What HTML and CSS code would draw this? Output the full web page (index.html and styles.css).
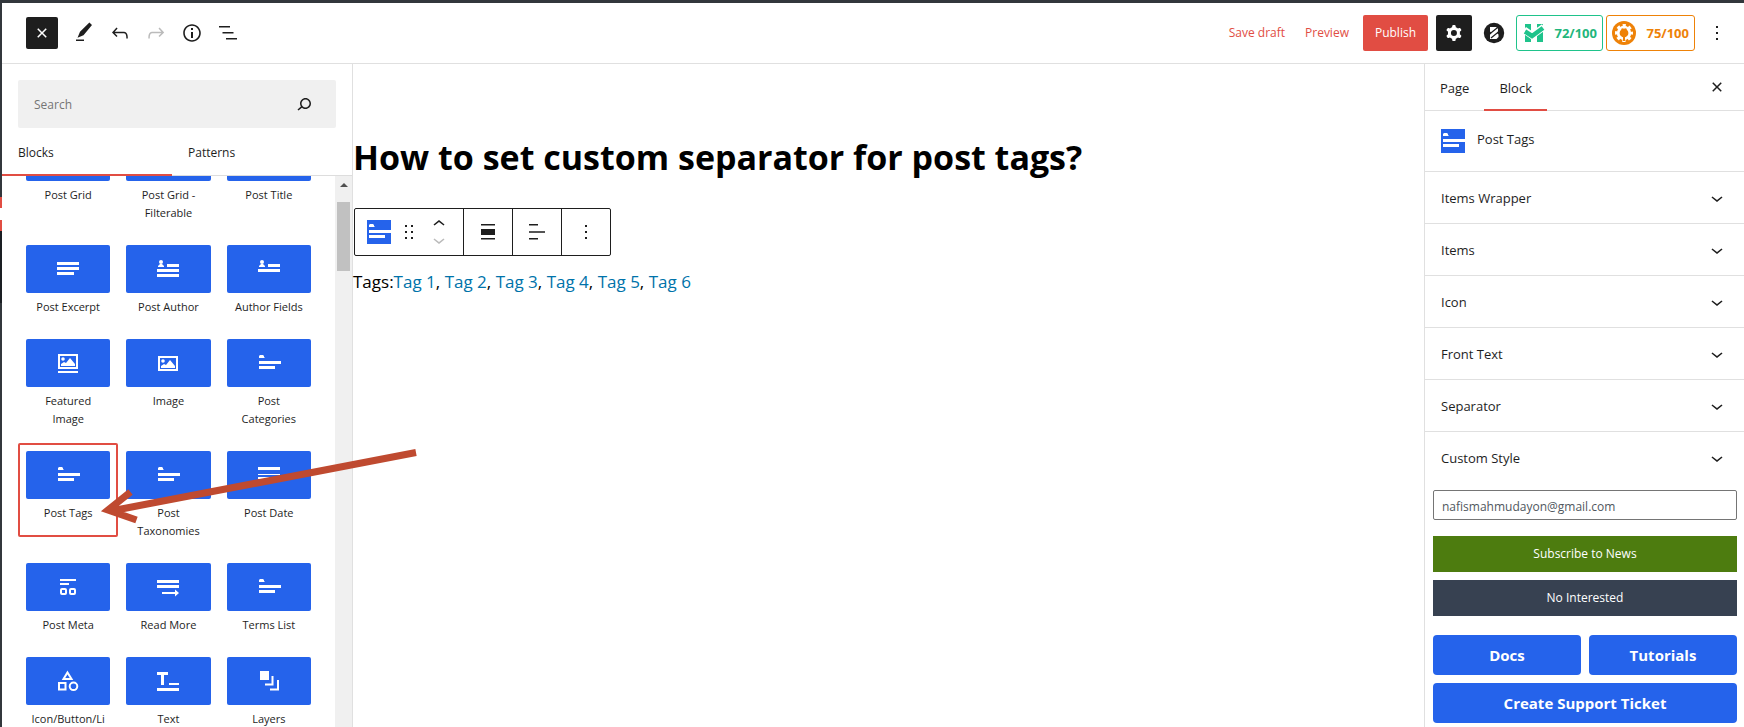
FILE: index.html
```html
<!DOCTYPE html>
<html lang="en">
<head>
<meta charset="utf-8">
<title>Edit Page</title>
<link rel="stylesheet" href="styles.css">
</head>
<body>
<svg class="sprite" aria-hidden="true">
  <symbol id="i-close" viewBox="0 0 24 24"><path d="M12 13.06l3.712 3.713 1.061-1.06L13.061 12l3.712-3.712-1.06-1.06L12 10.938 8.288 7.227l-1.061 1.06L10.939 12l-3.712 3.712 1.06 1.061L12 13.061z"/></symbol>
  <symbol id="i-down" viewBox="0 0 24 24"><path d="M17.5 11.6L12 16l-5.5-4.4.9-1.2L12 14l4.5-3.6 1 1.2z"/></symbol>
  <symbol id="i-up" viewBox="0 0 24 24"><path d="M6.5 12.4L12 8l5.5 4.4-.9 1.2L12 10l-4.5 3.6-1-1.2z"/></symbol>
  <symbol id="i-more" viewBox="0 0 24 24"><path d="M13 19h-2v-2h2v2zm0-6h-2v-2h2v2zm0-6h-2V5h2v2z"/></symbol>
  <symbol id="i-tags" viewBox="0 0 24 24"><path d="M2 7V5l1-1h3l1 1v1l1 1zM2 10h22v3H2zM2 15h16v3H2z"/></symbol>
  <symbol id="i-image" viewBox="0 0 24 24"><path fill="none" stroke="currentColor" stroke-width="2" d="M3 6h18v13H3z"/><circle cx="7" cy="10" r="1.8"/><path d="M5 17v-2l3-2 2 1 4-5 5 6v2z"/></symbol>
</svg>
<div class="app">
  <header class="topbar">
    <div class="tools">
      <button class="tool tool-dark" aria-label="Close inserter"><svg class="icon"><use href="#i-close"/></svg></button>
      <button class="tool" aria-label="Edit"><svg class="icon" viewBox="0 0 24 24"><path d="m20 4-2.600-2.600L8 10.800l-2.500 6 6-2.600L20 4Zm-8 14.500H4V20h8v-1.500Z"/></svg></button>
      <button class="tool" aria-label="Undo"><svg class="icon" viewBox="0 0 24 24"><path d="M18.300 11.700c-.6-.6-1.400-.9-2.300-.9H6.700l2.900-3.300-1.100-1-4.500 5L8.500 16l1-1-2.700-2.700H16c.5 0 .9.2 1.300.5 1 1 1 3.400 1 4.500v.3h1.500v-.2c0-1.500 0-4.300-1.500-5.700z"/></svg></button>
      <button class="tool tool-off" aria-label="Redo"><svg class="icon" viewBox="0 0 24 24"><path d="M15.600 6.500l-1.100 1 2.900 3.300H8c-.9 0-1.700.3-2.300.9-1.400 1.500-1.400 4.200-1.400 5.600v.2h1.500v-.3c0-1.100 0-3.500 1-4.500.3-.3.7-.5 1.300-.5h9.200L14.500 15l1.100 1.100 4.600-4.600-4.600-5z"/></svg></button>
      <button class="tool" aria-label="Details"><svg class="icon" viewBox="0 0 24 24"><path d="M12 3.200c-4.800 0-8.800 3.900-8.800 8.800 0 4.800 3.900 8.800 8.800 8.800 4.800 0 8.800-3.900 8.800-8.800 0-4.800-4-8.800-8.800-8.800zm0 16c-4 0-7.200-3.300-7.200-7.200C4.800 8 8 4.800 12 4.800s7.200 3.300 7.200 7.200c0 4-3.200 7.200-7.200 7.200zM11 17h2v-6h-2v6zm0-8h2V7h-2v2z"/></svg></button>
      <button class="tool" aria-label="List view"><svg class="icon" viewBox="0 0 24 24"><path d="M3 5h11v1.500H3zM6.500 11h11v1.500h-11zM10 17h11v1.500H10z"/></svg></button>
    </div>
    <div class="actions">
      <button class="text-button">Save draft</button>
      <button class="text-button">Preview</button>
      <button class="publish">Publish</button>
      <button class="settings" aria-label="Settings"><svg class="icon" viewBox="0 0 24 24"><path fill-rule="evenodd" d="M10.289 4.836A1 1 0 0111.275 4h1.306a1 1 0 01.987.836l.244 1.466c.787.26 1.503.679 2.108 1.218l1.393-.522a1 1 0 011.216.437l.653 1.130a1 1 0 01-.23 1.273l-1.148.944a6.025 6.025 0 010 2.435l1.149.946a1 1 0 01.23 1.272l-.653 1.130a1 1 0 01-1.216.437l-1.394-.522c-.605.54-1.320.958-2.108 1.218l-.244 1.466a1 1 0 01-.987.836h-1.306a1 1 0 01-.986-.836l-.244-1.466a5.995 5.995 0 01-2.108-1.218l-1.394.522a1 1 0 01-1.217-.436l-.653-1.131a1 1 0 01.23-1.272l1.149-.946a6.026 6.026 0 010-2.435l-1.148-.944a1 1 0 01-.23-1.272l.653-1.131a1 1 0 011.217-.437l1.393.522a5.994 5.994 0 012.108-1.218l.244-1.466zM14.929 12a3 3 0 11-6 0 3 3 0 016 0z"/></svg></button>
      <button class="plugin" aria-label="Blocks plugin"><svg class="icon" viewBox="0 0 24 24"><circle cx="12" cy="12" r="10.200"/><path fill="#fff" d="M8 6h6l2 2v2.500L15 12l1.500 1.500V16L14.500 18H8v-4.500L9.500 12 8 10.500z"/><path fill="none" stroke="#1e1e1e" stroke-width="1.200" d="M7 13.500l8-6.500M9 17l8-6.500"/></svg></button>
      <button class="score score-green"><svg class="score-logo" viewBox="0 0 24 24"><path d="M3 3h6v18H3zM15 3h6v18h-6z"/><path fill="none" stroke="#fff" stroke-width="7" d="M2 9l8 5.500L22 6"/><path fill="none" stroke="currentColor" stroke-width="4.500" d="M3 10.500l7 4.500L21 7"/></svg>72/100</button>
      <button class="score score-orange"><svg class="score-logo" viewBox="0 0 24 24"><circle cx="12" cy="12" r="12"/><g fill="none" stroke="#fff"><circle cx="12" cy="12" r="5.800" stroke-width="2.800"/><circle cx="12" cy="12" r="7.700" stroke-width="2.600" stroke-dasharray="3.200 2.848" stroke-dashoffset="1.600"/></g><path d="M9.500 7.500h1.500V10h2V7.500h1.500V10h1v2.500c0 1.500-1 2.500-2.500 3V20h-2v-4.500c-1.500-.5-2.500-1.500-2.500-3V10h1z"/></svg>75/100</button>
      <button class="tool more" aria-label="Options"><svg class="icon"><use href="#i-more"/></svg></button>
    </div>
  </header>

  <div class="workspace">
    <aside class="inserter">
      <div class="search">
        <input class="search-input" type="search" placeholder="Search" aria-label="Search for blocks">
        <svg class="icon" viewBox="0 0 24 24"><path d="M13.500 6C10.500 6 8 8.500 8 11.500c0 1.100.3 2.100.9 3l-3.400 3 1 1.100 3.400-2.900c1 .9 2.200 1.400 3.600 1.400 3 0 5.500-2.500 5.500-5.500C19 8.500 16.500 6 13.500 6zm0 9.500c-2.200 0-4-1.800-4-4s1.800-4 4-4 4 1.800 4 4-1.800 4-4 4z"/></svg>
      </div>
      <div class="insert-tabs">
        <button class="insert-tab is-active">Blocks</button>
        <button class="insert-tab">Patterns</button>
      </div>
      <div class="library">
        <div class="blocks">
          <button class="block"><span class="tile"></span><span class="name">Post Grid</span></button>
          <button class="block"><span class="tile"></span><span class="name">Post Grid - Filterable</span></button>
          <button class="block"><span class="tile"></span><span class="name">Post Title</span></button>

          <button class="block"><span class="tile"><svg class="icon" viewBox="0 0 24 24"><path d="M1 5h22v3H1zM1 10h22v3H1zM1 15h17v3H1z"/></svg></span><span class="name">Post Excerpt</span></button>
          <button class="block"><span class="tile"><svg class="icon" viewBox="0 0 24 24"><circle cx="5" cy="5" r="2"/><path d="M2 10V9l2-2h2l2 2v1zM11 7h12v3H11zM1 12h22v3H1zM1 17h22v3H1z"/></svg></span><span class="name">Post Author</span></button>
          <button class="block"><span class="tile"><svg class="icon" viewBox="0 0 24 24"><circle cx="5" cy="5" r="2"/><path d="M2 10V9l2-2h2l2 2v1zM11 7h12v3H11zM1 12h22v3H1z"/></svg></span><span class="name">Author Fields</span></button>

          <button class="block"><span class="tile"><svg class="icon" viewBox="0 0 24 24"><path fill="none" stroke="currentColor" stroke-width="2" d="M3 4h18v13H3z"/><circle cx="7" cy="8" r="1.800"/><path d="M5 15v-2l3-2 2 1 4-5 5 6v2zM2 20h20v2H2z"/></svg></span><span class="name">Featured Image</span></button>
          <button class="block"><span class="tile"><svg class="icon"><use href="#i-image"/></svg></span><span class="name">Image</span></button>
          <button class="block"><span class="tile"><svg class="icon"><use href="#i-tags"/></svg></span><span class="name">Post Categories</span></button>

          <button class="block is-selected"><span class="tile"><svg class="icon"><use href="#i-tags"/></svg></span><span class="name">Post Tags</span></button>
          <button class="block"><span class="tile"><svg class="icon"><use href="#i-tags"/></svg></span><span class="name">Post Taxonomies</span></button>
          <button class="block"><span class="tile"><svg class="icon" viewBox="0 0 24 24"><path d="M1 4h22v3H1zM1 11h22v1H1zM1 14h22v2H1z"/></svg></span><span class="name">Post Date</span></button>

          <button class="block"><span class="tile"><svg class="icon" viewBox="0 0 24 24"><path d="M4 4h16v2H4zM4 8h9v2H4z"/><g fill="none" stroke="currentColor" stroke-width="2"><rect x="5" y="14" width="5" height="5" rx="1"/><rect x="14" y="14" width="5" height="5" rx="1"/></g></svg></span><span class="name">Post Meta</span></button>
          <button class="block"><span class="tile"><svg class="icon" viewBox="0 0 24 24"><path d="M1 5h22v3H1zM1 10h22v3H1zM6 17h13v-2.500l4 3.500-4 3.500V19H6z"/></svg></span><span class="name">Read More</span></button>
          <button class="block"><span class="tile"><svg class="icon"><use href="#i-tags"/></svg></span><span class="name">Terms List</span></button>

          <button class="block"><span class="tile"><svg class="icon" viewBox="0 0 24 24"><g fill="none" stroke="currentColor" stroke-width="2"><path d="M11.500 3.500l4 6.500h-8zM3 14h6.500v6.500H3z"/><circle cx="17.500" cy="17.300" r="3.800"/></g></svg></span><span class="name">Icon/Button/Li</span></button>
          <button class="block"><span class="tile"><svg class="icon" viewBox="0 0 24 24"><path d="M1 3h11v3H8v10H5V6H1zM13 14h10v2H13zM1 19h22v3H1z"/></svg></span><span class="name">Text</span></button>
          <button class="block"><span class="tile"><svg class="icon" viewBox="0 0 24 24"><path d="M3 2h9v9H3z"/><path fill="none" stroke="currentColor" stroke-width="2" d="M15.500 7v8.500H8M21 11v9.500h-8"/></svg></span><span class="name">Layers</span></button>
        </div>
        <div class="scrollbar" aria-hidden="true">
          <span class="scroll-arrow"></span>
          <span class="scroll-thumb"></span>
        </div>
      </div>
    </aside>

    <main class="canvas">
      <h1 class="title">How to set custom separator for post tags?</h1>
      <div class="block-toolbar">
        <div class="group group-block">
          <button class="bare" aria-label="Post Tags"><span class="badge"><svg class="icon"><use href="#i-tags"/></svg></span></button>
          <button class="bare" aria-label="Drag"><svg class="icon" viewBox="0 0 24 24"><path d="M8 7h2V5H8v2zm0 6h2v-2H8v2zm0 6h2v-2H8v2zm6-14v2h2V5h-2zm0 8h2v-2h-2v2zm0 6h2v-2h-2v2z"/></svg></button>
          <span class="movers">
            <button class="mover" aria-label="Move up"><svg class="icon"><use href="#i-up"/></svg></button>
            <button class="mover mover-off" aria-label="Move down"><svg class="icon"><use href="#i-down"/></svg></button>
          </span>
        </div>
        <button class="group" aria-label="Align"><svg class="icon" viewBox="0 0 24 24"><path d="M5 4h14v1.500H5zM5 9h14v6H5zM5 18h14v1.500H5z"/></svg></button>
        <button class="group" aria-label="Align text"><svg class="icon" viewBox="0 0 24 24"><path d="M4 4h9v1.500H4zM4 11.300h16v1.500H4zM4 18h9v1.500H4z"/></svg></button>
        <button class="group" aria-label="Options"><svg class="icon"><use href="#i-more"/></svg></button>
      </div>
      <p class="tags">Tags:<a href="#">Tag 1</a>, <a href="#">Tag 2</a>, <a href="#">Tag 3</a>, <a href="#">Tag 4</a>, <a href="#">Tag 5</a>, <a href="#">Tag 6</a></p>
    </main>

    <aside class="inspector">
      <div class="inspector-tabs">
        <button class="inspector-tab">Page</button>
        <button class="inspector-tab is-active">Block</button>
        <button class="tool close" aria-label="Close settings"><svg class="icon"><use href="#i-close"/></svg></button>
      </div>
      <div class="card"><span class="badge"><svg class="icon"><use href="#i-tags"/></svg></span><h2 class="card-title">Post Tags</h2></div>
      <button class="panel">Items Wrapper<svg class="icon"><use href="#i-down"/></svg></button>
      <button class="panel">Items<svg class="icon"><use href="#i-down"/></svg></button>
      <button class="panel">Icon<svg class="icon"><use href="#i-down"/></svg></button>
      <button class="panel">Front Text<svg class="icon"><use href="#i-down"/></svg></button>
      <button class="panel">Separator<svg class="icon"><use href="#i-down"/></svg></button>
      <button class="panel">Custom Style<svg class="icon"><use href="#i-down"/></svg></button>
      <form class="subscribe">
        <input class="email" type="email" value="nafismahmudayon@gmail.com" aria-label="Email">
        <button class="wide wide-green" type="button">Subscribe to News</button>
        <button class="wide wide-slate" type="button">No Interested</button>
      </form>
      <div class="links">
        <a class="link" href="#">Docs</a>
        <a class="link" href="#">Tutorials</a>
        <a class="link link-full" href="#">Create Support Ticket</a>
      </div>
    </aside>
  </div>
</div>
<svg class="pointer" viewBox="0 0 330 90" aria-hidden="true"><path d="M319 12.500L14 71M33.500 52L11 70L39.500 80" fill="none" stroke="#bf4a30" stroke-width="7"/></svg>
</body>
</html>
```
FILE: styles.css
```css
* { box-sizing: border-box; }

body {
  margin: 0;
  height: 100vh;
  overflow: hidden;
  position: relative;
  font: 13px/18px "Open Sans", "Noto Sans", sans-serif;
  color: #1e1e1e;
  background: #fff;
}

button, input {
  font: inherit;
  color: inherit;
  margin: 0;
  padding: 0;
  border: 0;
  background: none;
}

a { color: #0073aa; text-decoration: none; }

.sprite { position: absolute; width: 0; height: 0; }

.icon {
  display: block;
  flex: none;
  width: 24px;
  height: 24px;
  fill: currentColor;
}

.app {
  display: flex;
  flex-direction: column;
  height: 100%;
  border-top: 3px solid #32373c;
  padding-left: 2px;
  background: linear-gradient(#32373c 194px, #e14d43 194px 205px, #fff 205px 217px, #e14d43 217px 228px, #1a1e23 228px 300px, #32373c 300px) 0 0 / 2px 100% no-repeat;
}

/* Top bar */
.topbar {
  flex: none;
  display: flex;
  justify-content: space-between;
  align-items: center;
  height: 61px;
  padding: 0 11px 0 24px;
  border-bottom: 1px solid #e0e0e0;
}

.tools, .actions { display: flex; align-items: center; }
.tools { gap: 4px; }

.tool {
  display: flex;
  align-items: center;
  justify-content: center;
  width: 32px;
  height: 32px;
}

.tool-dark { background: #1e1e1e; color: #fff; border-radius: 2px; margin-right: 6px; }
.tool-off { color: #bbb; }

.text-button { color: #e14d43; font-size: 12px; margin-right: 20px; }

.publish {
  height: 36px;
  padding: 0 12px;
  border-radius: 2px;
  background: #e14d43;
  color: #fff;
  margin-right: 8px;
  font-size: 12px;
}
.text-button + .publish { margin-left: -6px; }

.settings {
  display: flex;
  align-items: center;
  justify-content: center;
  width: 36px;
  height: 36px;
  border-radius: 2px;
  background: #1e1e1e;
  color: #fff;
}

.plugin { padding: 0 10px; }

.score {
  display: flex;
  align-items: center;
  justify-content: space-between;
  width: 87px;
  height: 36px;
  padding: 0 5px;
  border: 1px solid;
  border-radius: 3px;
  font-weight: 700;
  font-size: 13px;
}
.score-logo { width: 24px; height: 24px; fill: currentColor; }
.score-green { color: #1fb67c; border-color: #1fc38b; margin-right: 3px; }
.score-green .score-logo { color: #1fc38b; }
.score-orange { color: #ee8208; width: 89px; }
.more { margin-left: 6px; }

/* Columns */
.workspace {
  flex: 1;
  min-height: 0;
  display: grid;
  grid-template-columns: 351px 1fr 320px;
}

/* Block inserter */
.inserter {
  display: flex;
  flex-direction: column;
  min-height: 0;
  border-right: 1px solid #e0e0e0;
}

.search {
  flex: none;
  display: flex;
  align-items: center;
  height: 48px;
  margin: 16px 16px 0;
  padding: 0 20px 0 16px;
  border-radius: 2px;
  background: #f0f0f0;
}
.search-input { flex: 1; min-width: 0; padding-top: 2px; outline: none; font-size: 12px; }
.search-input::placeholder { color: #757575; }

.insert-tabs {
  flex: none;
  display: flex;
  height: 48px;
  border-bottom: 1px solid #ddd;
}
.insert-tab {
  width: 170px;
  height: 48px;
  padding: 2px 16px 0;
  text-align: left;
  font-size: 12px;
}
.insert-tab.is-active, .inspector-tab.is-active { box-shadow: inset 0 -2px #e14d43; }

.library { flex: 1; display: flex; min-height: 0; overflow: hidden; }

.blocks {
  flex: 1;
  align-self: flex-start;
  display: grid;
  grid-template-columns: repeat(3, 1fr);
  align-items: start;
  margin: -51px 16px 0;
}

.block {
  display: block;
  padding: 8px 8px 15px;
  font-size: 11px;
  text-align: center;
  line-height: 18px;
}
.block.is-selected {
  border-radius: 2px;
  box-shadow: inset 0 0 0 2px #e14d43;
}

.tile {
  display: flex;
  align-items: center;
  justify-content: center;
  height: 48px;
  margin-bottom: 5px;
  border-radius: 2px;
  background: #2563eb;
  color: #fff;
}
.name { display: block; padding: 0 4px; }

.scrollbar {
  width: 17px;
  background: #f0f0f0;
  display: flex;
  flex-direction: column;
  align-items: center;
}
.scroll-arrow {
  margin: 7px 0 15px;
  border: 4px solid transparent;
  border-top: 0;
  border-bottom-color: #505050;
}
.scroll-thumb { width: 13px; height: 69px; background: #c1c1c1; }

/* Editor canvas */
.canvas { min-width: 0; padding: 69px 0 0; }

.title {
  margin: 0;
  color: #000;
  font-size: 34px;
  line-height: 48px;
  font-weight: 700;
}

.block-toolbar {
  display: flex;
  width: fit-content;
  height: 48px;
  margin: 27px 0 0 1px;
  border: 1px solid #1e1e1e;
  border-radius: 2px;
}
.group {
  display: flex;
  align-items: center;
  justify-content: center;
  width: 49px;
}
.group + .group { border-left: 1px solid #1e1e1e; }
.group-block { width: 108px; gap: 6px; }
.movers { display: flex; flex-direction: column; }
.mover { height: 16px; display: flex; align-items: center; }
.mover-off { color: #bbb; }

.badge { display: block; background: #2563eb; color: #fff; }

.tags {
  margin: 14px 0 0;
  color: #000;
  font-size: 17px;
  line-height: 24px;
}

/* Inspector */
.inspector { border-left: 1px solid #e0e0e0; min-height: 0; }

.inspector-tabs {
  display: flex;
  height: 47px;
  border-bottom: 1px solid #e0e0e0;
}
.inspector-tab { height: 47px; padding: 0 15px; font-size: 13px; }
.close { height: 46px; margin: 0 11px 0 auto; }

.card { display: flex; height: 60px; padding: 18px 16px 0; gap: 12px; }
.card .badge { height: 24px; }
.card-title { margin: 0; font-size: 13px; line-height: 20px; font-weight: 400; }

.panel {
  display: flex;
  align-items: center;
  justify-content: space-between;
  width: 100%;
  height: 52px;
  padding: 0 15px 0 16px;
  border-top: 1px solid #e0e0e0;
  font-size: 13px;
}

.subscribe { display: flex; flex-direction: column; padding: 7px 7px 0 8px; }
.email {
  height: 30px;
  margin-bottom: 16px;
  padding: 2px 8px 0;
  border: 1px solid #757575;
  border-radius: 2px;
  font-size: 12px;
  color: #50575e;
}
.wide { height: 36px; color: #fff; font-size: 12px; }
.wide-green { background: #4d7c0f; margin-bottom: 8px; }
.wide-slate { background: #374151; }

.links {
  display: grid;
  grid-template-columns: 1fr 1fr;
  gap: 8px;
  padding: 19px 7px 0 8px;
}
.link {
  border-radius: 4px;
  background: #2563eb;
  color: #fff;
  font-size: 15px;
  line-height: 40px;
  font-weight: 700;
  text-align: center;
}
.link-full { grid-column: span 2; }

/* Arrow drawn over the page */
.pointer {
  position: absolute;
  left: 97px;
  top: 440px;
  width: 330px;
  height: 90px;
  pointer-events: none;
}
```
